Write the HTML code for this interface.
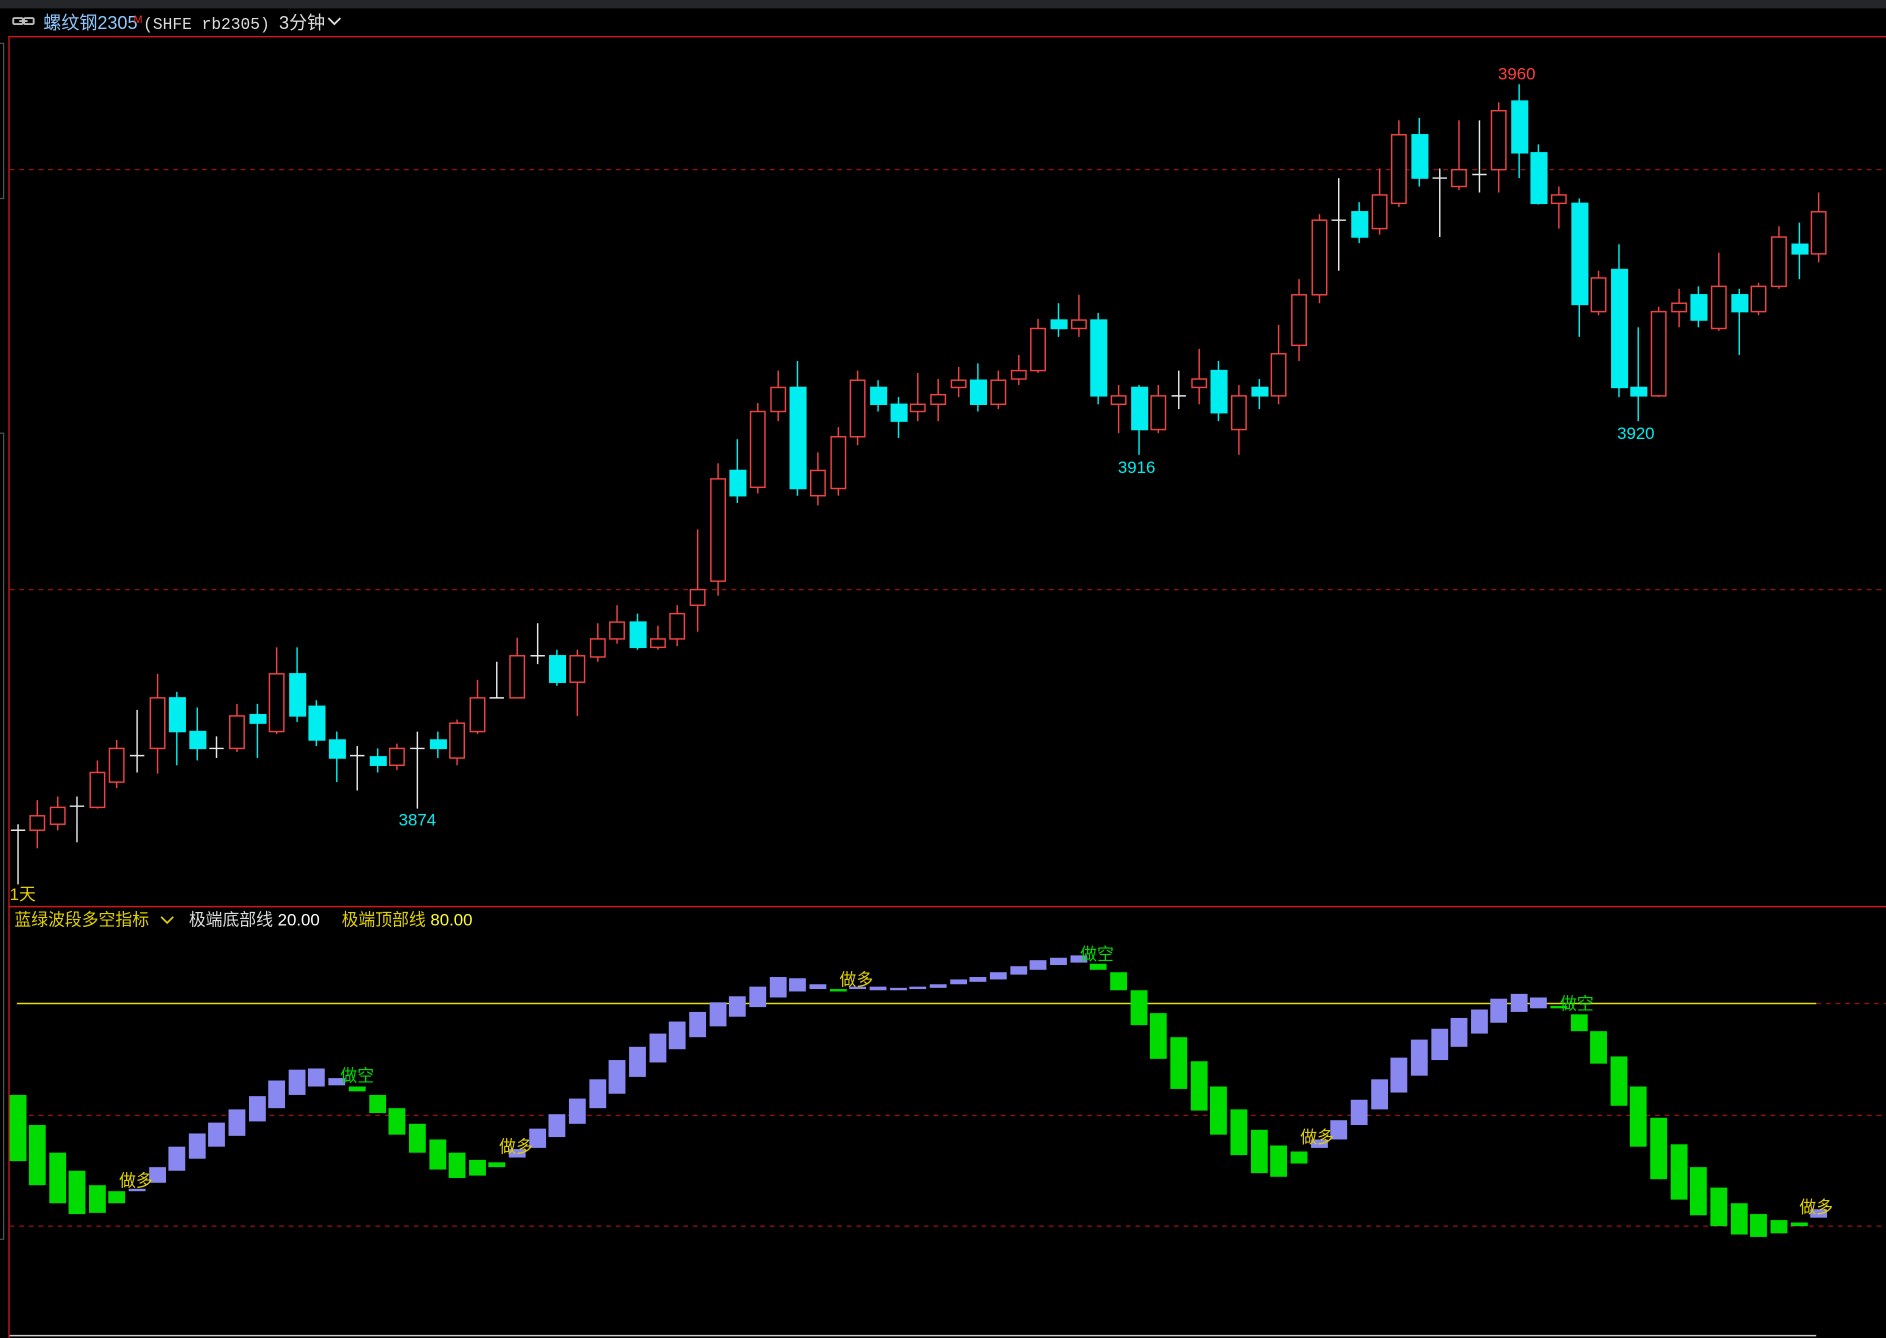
<!DOCTYPE html>
<html><head><meta charset="utf-8"><style>
html,body{margin:0;padding:0;background:#000;width:1886px;height:1338px;overflow:hidden}
svg{display:block}
.s{font-family:"Liberation Sans","Noto Sans CJK SC",sans-serif}
.m{font-family:"Liberation Mono","Noto Sans CJK SC",monospace}
</style></head><body>
<svg width="1886" height="1338" viewBox="0 0 1568 1112" preserveAspectRatio="none" xmlns="http://www.w3.org/2000/svg">
<rect width="1568" height="1112" fill="#000"/>
<rect width="1568" height="7" fill="#24262a"/>
<g fill="none" stroke="#bbb" stroke-width="1.6"><rect x="11" y="15" width="8" height="5" rx="1"/><rect x="20" y="15" width="8" height="5" rx="1"/><line x1="16" y1="17.5" x2="23" y2="17.5"/></g>
<text class="s" x="36" y="24" font-size="15" fill="#8fc8ff">螺纹钢2305</text>
<text class="s" x="111" y="19" font-size="9" fill="#ff3030">M</text>
<text class="m" x="119" y="24" font-size="13.5" fill="#dcdcdc">(SHFE rb2305)</text>
<text class="s" x="232" y="24" font-size="15" fill="#dcdcdc">3分钟</text>
<path d="M273 15l5 5 5-5" stroke="#ddd" stroke-width="1.5" fill="none"/>
<line x1="7" y1="30.5" x2="1568" y2="30.5" stroke="#d01818" stroke-width="1.2"/>
<line x1="7.5" y1="30" x2="7.5" y2="1112" stroke="#c01818" stroke-width="1.2"/>
<path d="M0 36H3V165H0M0 360H3V1030H0" stroke="#555" fill="none"/>
<g stroke="#9a1010" stroke-dasharray="4,4" stroke-width="1">
<line x1="8" y1="141" x2="1568" y2="141"/><line x1="8" y1="490" x2="1568" y2="490"/>
<line x1="1510" y1="834" x2="1568" y2="834"/><line x1="8" y1="927" x2="1568" y2="927"/><line x1="8" y1="1019" x2="1568" y2="1019"/>
</g>
<line x1="7" y1="753.5" x2="1568" y2="753.5" stroke="#d01818" stroke-width="1.2"/>
<line x1="14" y1="834" x2="1510" y2="834" stroke="#e0e000" stroke-width="1.2"/>
<line x1="8" y1="1110" x2="1510" y2="1110" stroke="#ccc" stroke-width="1.2"/>
<text class="s" x="8" y="748" font-size="14" fill="#e8d000">1天</text>
<text class="s" x="12" y="769" font-size="14" fill="#e0d000">蓝绿波段多空指标</text>
<path d="M134 762l5 5 5-5" stroke="#e0d000" stroke-width="1.4" fill="none"/>
<text class="s" x="157" y="769" font-size="14" fill="#dcdcdc">极端底部线 <tspan fill="#fff">20.00</tspan></text>
<text class="s" x="284" y="769" font-size="14" fill="#e0d000">极端顶部线 <tspan fill="#ffff30">80.00</tspan></text>
<g stroke="#e8e8e8" stroke-width="1.2" fill="none">
<path d="M15 685V735M9 690H21"/><path d="M64 662V700M58 670H70"/><path d="M114 590V642M108 628H120"/>
<path d="M180 612V630M174 622H186"/><path d="M297 620V657M291 628H303"/><path d="M347 608V672M341 622H353"/>
<path d="M413 550V580M407 580H419"/><path d="M447 518V552M441 545H453"/><path d="M980 308V340M974 329H986"/>
<path d="M1113 148V225M1107 183H1119"/><path d="M1197 140V197M1191 148H1203"/><path d="M1230 100V160M1224 145H1236"/>
</g>
<g stroke="#f04444" stroke-width="1.2" fill="#000">
<path d="M31 665V705"/><rect x="25" y="678" width="12" height="12"/>
<path d="M48 662V690"/><rect x="42" y="671" width="12" height="14"/>
<path d="M81 632V672"/><rect x="75" y="642" width="12" height="29"/>
<path d="M97 615V655"/><rect x="91" y="622" width="12" height="28"/>
<path d="M131 560V643"/><rect x="125" y="580" width="12" height="42"/>
<path d="M197 585V625"/><rect x="191" y="595" width="12" height="27"/>
<path d="M230 538V610"/><rect x="224" y="560" width="12" height="48"/>
<path d="M330 618V640"/><rect x="324" y="622" width="12" height="14"/>
<path d="M380 598V636"/><rect x="374" y="601" width="12" height="29"/>
<path d="M397 565V610"/><rect x="391" y="580" width="12" height="28"/>
<path d="M430 530V580"/><rect x="424" y="545" width="12" height="35"/>
<path d="M480 540V595"/><rect x="474" y="545" width="12" height="22"/>
<path d="M497 518V550"/><rect x="491" y="531" width="12" height="15"/>
<path d="M513 503V535"/><rect x="507" y="517" width="12" height="14"/>
<path d="M547 520V540"/><rect x="541" y="531" width="12" height="7"/>
<path d="M563 503V537"/><rect x="557" y="510" width="12" height="21"/>
<path d="M580 440V525"/><rect x="574" y="490" width="12" height="13"/>
<path d="M597 385V495"/><rect x="591" y="398" width="12" height="85"/>
<path d="M630 335V410"/><rect x="624" y="342" width="12" height="63"/>
<path d="M647 308V350"/><rect x="641" y="322" width="12" height="20"/>
<path d="M680 376V420"/><rect x="674" y="391" width="12" height="21"/>
<path d="M697 355V412"/><rect x="691" y="363" width="12" height="43"/>
<path d="M713 308V370"/><rect x="707" y="316" width="12" height="47"/>
<path d="M763 310V350"/><rect x="757" y="336" width="12" height="6"/>
<path d="M780 315V350"/><rect x="774" y="328" width="12" height="8"/>
<path d="M797 305V330"/><rect x="791" y="316" width="12" height="6"/>
<path d="M830 308V340"/><rect x="824" y="316" width="12" height="20"/>
<path d="M847 295V320"/><rect x="841" y="308" width="12" height="7"/>
<path d="M863 265V310"/><rect x="857" y="273" width="12" height="35"/>
<path d="M897 245V280"/><rect x="891" y="266" width="12" height="7"/>
<path d="M930 320V360"/><rect x="924" y="329" width="12" height="7"/>
<path d="M963 320V360"/><rect x="957" y="329" width="12" height="28"/>
<path d="M997 290V336"/><rect x="991" y="315" width="12" height="7"/>
<path d="M1030 320V378"/><rect x="1024" y="329" width="12" height="28"/>
<path d="M1063 270V336"/><rect x="1057" y="294" width="12" height="35"/>
<path d="M1080 232V300"/><rect x="1074" y="245" width="12" height="42"/>
<path d="M1097 178V252"/><rect x="1091" y="183" width="12" height="62"/>
<path d="M1147 140V195"/><rect x="1141" y="162" width="12" height="28"/>
<path d="M1163 100V172"/><rect x="1157" y="112" width="12" height="57"/>
<path d="M1213 100V158"/><rect x="1207" y="141" width="12" height="14"/>
<path d="M1246 85V160"/><rect x="1240" y="92" width="12" height="49"/>
<path d="M1296 155V190"/><rect x="1290" y="162" width="12" height="7"/>
<path d="M1329 225V262"/><rect x="1323" y="231" width="12" height="28"/>
<path d="M1379 255V330"/><rect x="1373" y="259" width="12" height="70"/>
<path d="M1396 240V272"/><rect x="1390" y="252" width="12" height="7"/>
<path d="M1429 210V275"/><rect x="1423" y="238" width="12" height="35"/>
<path d="M1462 235V262"/><rect x="1456" y="238" width="12" height="21"/>
<path d="M1479 188V240"/><rect x="1473" y="197" width="12" height="41"/>
<path d="M1512 160V218"/><rect x="1506" y="176" width="12" height="35"/>
</g>
<g stroke="#00eef0" stroke-width="1.2" fill="#00eef0">
<path d="M147 575V636"/><rect x="141" y="580" width="13" height="28"/>
<path d="M164 588V632"/><rect x="158" y="608" width="13" height="14"/>
<path d="M214 585V630"/><rect x="208" y="594" width="13" height="7"/>
<path d="M247 538V600"/><rect x="241" y="560" width="13" height="35"/>
<path d="M263 582V620"/><rect x="257" y="587" width="13" height="28"/>
<path d="M280 608V650"/><rect x="274" y="615" width="13" height="15"/>
<path d="M314 622V642"/><rect x="308" y="629" width="13" height="7"/>
<path d="M364 608V630"/><rect x="358" y="615" width="13" height="7"/>
<path d="M463 540V570"/><rect x="457" y="545" width="13" height="22"/>
<path d="M530 510V540"/><rect x="524" y="517" width="13" height="21"/>
<path d="M613 365V418"/><rect x="607" y="391" width="13" height="21"/>
<path d="M663 300V412"/><rect x="657" y="322" width="13" height="84"/>
<path d="M730 316V342"/><rect x="724" y="322" width="13" height="14"/>
<path d="M747 330V364"/><rect x="741" y="336" width="13" height="14"/>
<path d="M813 302V342"/><rect x="807" y="316" width="13" height="20"/>
<path d="M880 252V280"/><rect x="874" y="266" width="13" height="7"/>
<path d="M913 260V336"/><rect x="907" y="266" width="13" height="63"/>
<path d="M947 320V378"/><rect x="941" y="322" width="13" height="35"/>
<path d="M1013 300V350"/><rect x="1007" y="308" width="13" height="35"/>
<path d="M1047 315V340"/><rect x="1041" y="322" width="13" height="7"/>
<path d="M1130 168V202"/><rect x="1124" y="176" width="13" height="21"/>
<path d="M1180 98V155"/><rect x="1174" y="112" width="13" height="36"/>
<path d="M1263 70V148"/><rect x="1257" y="84" width="13" height="43"/>
<path d="M1279 120V170"/><rect x="1273" y="127" width="13" height="42"/>
<path d="M1313 165V280"/><rect x="1307" y="169" width="13" height="84"/>
<path d="M1346 203V330"/><rect x="1340" y="224" width="13" height="98"/>
<path d="M1362 272V350"/><rect x="1356" y="322" width="13" height="7"/>
<path d="M1412 238V272"/><rect x="1406" y="245" width="13" height="21"/>
<path d="M1446 240V295"/><rect x="1440" y="245" width="13" height="14"/>
<path d="M1496 185V232"/><rect x="1490" y="203" width="13" height="8"/>
</g>
<text class="s" x="1261" y="66" font-size="14" fill="#ff4040" text-anchor="middle">3960</text>
<text class="s" x="347" y="686" font-size="14" fill="#00eef0" text-anchor="middle">3874</text>
<text class="s" x="945" y="393" font-size="14" fill="#00eef0" text-anchor="middle">3916</text>
<text class="s" x="1360" y="365" font-size="14" fill="#00eef0" text-anchor="middle">3920</text>
<g fill="#00dc00">
<rect x="8" y="910" width="14" height="55"/><rect x="24" y="935" width="14" height="50"/><rect x="41" y="958" width="14" height="42"/>
<rect x="57" y="973" width="14" height="36"/><rect x="74" y="985" width="14" height="23"/><rect x="90" y="990" width="14" height="10"/>
<rect x="290" y="903" width="14" height="4"/><rect x="307" y="910" width="14" height="15"/><rect x="323" y="921" width="14" height="22"/>
<rect x="340" y="934" width="14" height="24"/><rect x="357" y="947" width="14" height="25"/><rect x="373" y="958" width="14" height="21"/>
<rect x="390" y="964" width="14" height="13"/><rect x="406" y="966" width="14" height="4"/><rect x="690" y="822" width="14" height="2"/>
<rect x="906" y="801" width="14" height="5"/><rect x="923" y="808" width="14" height="15"/><rect x="940" y="823" width="14" height="29"/>
<rect x="956" y="842" width="14" height="38"/><rect x="973" y="862" width="14" height="43"/><rect x="990" y="882" width="14" height="41"/>
<rect x="1006" y="903" width="14" height="40"/><rect x="1023" y="922" width="14" height="38"/><rect x="1040" y="939" width="14" height="36"/>
<rect x="1056" y="952" width="14" height="26"/><rect x="1073" y="957" width="14" height="10"/><rect x="1289" y="836" width="14" height="2"/>
<rect x="1306" y="843" width="14" height="14"/><rect x="1322" y="857" width="14" height="27"/><rect x="1339" y="878" width="14" height="41"/>
<rect x="1355" y="903" width="14" height="50"/><rect x="1372" y="929" width="14" height="51"/><rect x="1389" y="951" width="14" height="46"/>
<rect x="1405" y="970" width="14" height="40"/><rect x="1422" y="987" width="14" height="32"/><rect x="1439" y="1000" width="14" height="26"/>
<rect x="1455" y="1009" width="14" height="19"/><rect x="1472" y="1014" width="14" height="11"/><rect x="1489" y="1016" width="14" height="3"/>
</g>
<g fill="#8888f0">
<rect x="107" y="988" width="14" height="2"/><rect x="124" y="970" width="14" height="13"/><rect x="140" y="953" width="14" height="20"/>
<rect x="157" y="942" width="14" height="21"/><rect x="173" y="933" width="14" height="20"/><rect x="190" y="922" width="14" height="22"/>
<rect x="207" y="911" width="14" height="21"/><rect x="223" y="898" width="14" height="23"/><rect x="240" y="889" width="14" height="21"/>
<rect x="256" y="888" width="14" height="15"/><rect x="273" y="896" width="14" height="6"/>
<rect x="423" y="955" width="14" height="7"/><rect x="440" y="938" width="14" height="16"/><rect x="456" y="926" width="14" height="19"/>
<rect x="473" y="913" width="14" height="21"/><rect x="490" y="897" width="14" height="24"/><rect x="506" y="881" width="14" height="28"/>
<rect x="523" y="870" width="14" height="25"/><rect x="540" y="859" width="14" height="24"/><rect x="556" y="849" width="14" height="23"/>
<rect x="573" y="841" width="14" height="21"/><rect x="590" y="833" width="14" height="20"/><rect x="606" y="828" width="14" height="17"/>
<rect x="623" y="820" width="14" height="17"/><rect x="640" y="812" width="14" height="17"/><rect x="656" y="813" width="14" height="11"/>
<rect x="673" y="818" width="14" height="4"/><rect x="706" y="820" width="14" height="2"/><rect x="723" y="820" width="14" height="3"/>
<rect x="740" y="821" width="14" height="2"/><rect x="756" y="820" width="14" height="2"/><rect x="773" y="818" width="14" height="3"/>
<rect x="790" y="814" width="14" height="4"/><rect x="806" y="812" width="14" height="4"/><rect x="823" y="808" width="14" height="6"/>
<rect x="840" y="803" width="14" height="7"/><rect x="856" y="798" width="14" height="8"/><rect x="873" y="796" width="14" height="6"/>
<rect x="890" y="794" width="14" height="6"/>
<rect x="1090" y="947" width="14" height="7"/><rect x="1106" y="931" width="14" height="16"/><rect x="1123" y="914" width="14" height="21"/>
<rect x="1140" y="897" width="14" height="25"/><rect x="1156" y="879" width="14" height="29"/><rect x="1173" y="864" width="14" height="30"/>
<rect x="1190" y="855" width="14" height="26"/><rect x="1206" y="846" width="14" height="24"/><rect x="1223" y="839" width="14" height="20"/>
<rect x="1239" y="830" width="14" height="20"/><rect x="1256" y="826" width="14" height="15"/><rect x="1272" y="829" width="14" height="9"/>
<rect x="1505" y="1005" width="14" height="7"/>
</g>
<g class="s" font-size="14">
<text x="99" y="986" fill="#e0d000">做多</text>
<text x="283" y="899" fill="#00dc00">做空</text>
<text x="415" y="958" fill="#e0d000">做多</text>
<text x="698" y="819" fill="#e0d000">做多</text>
<text x="898" y="798" fill="#00dc00">做空</text>
<text x="1081" y="950" fill="#e0d000">做多</text>
<text x="1297" y="839" fill="#00dc00">做空</text>
<text x="1496" y="1008" fill="#e0d000">做多</text>
</g>
</svg>
</body></html>
